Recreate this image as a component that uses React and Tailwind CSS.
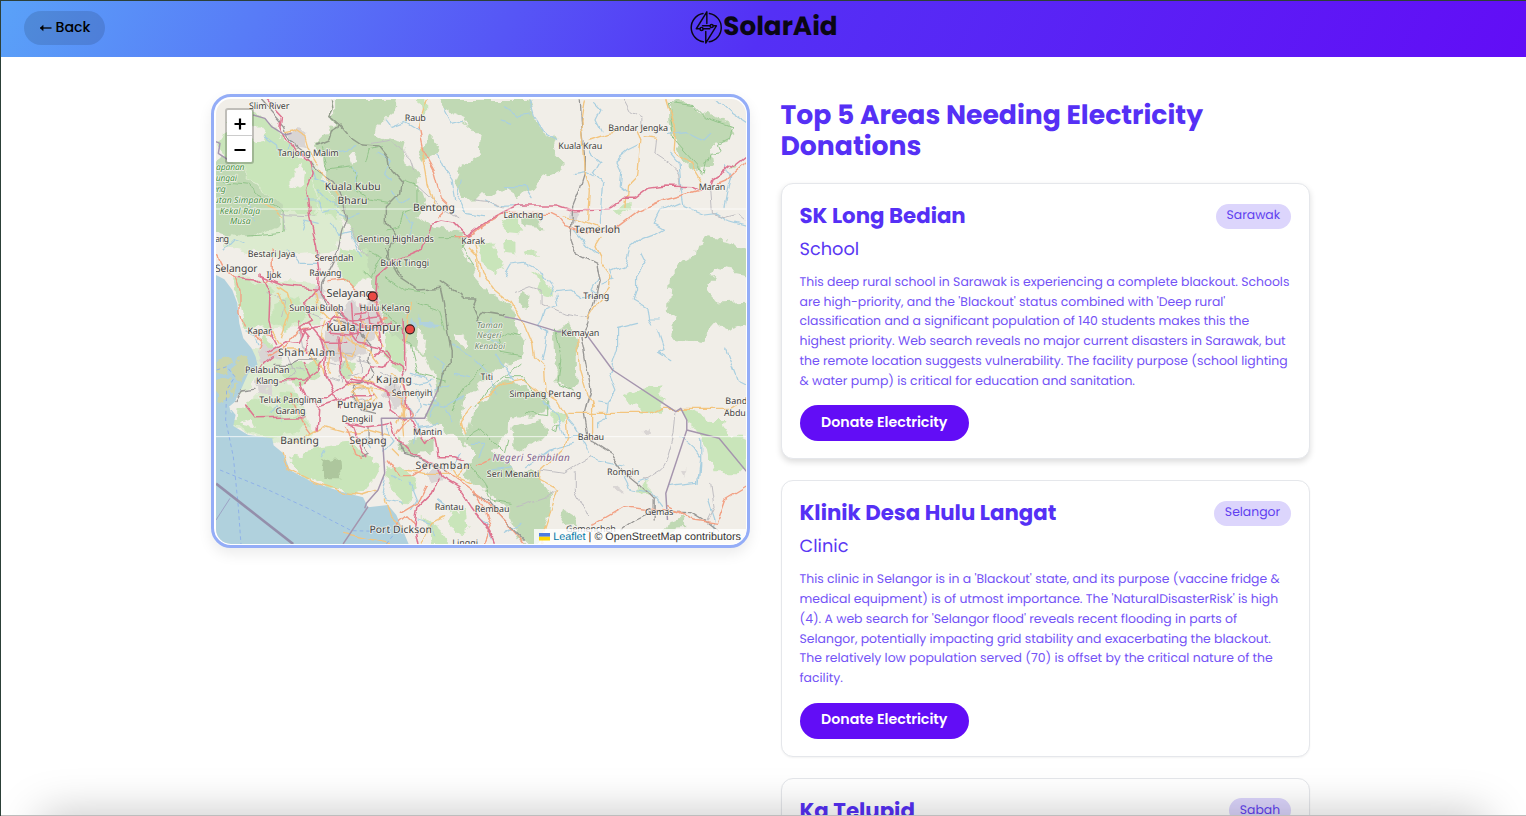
import React from "react";

const areas = [
  {
    name: "SK Long Bedian",
    type: "School",
    state: "Sarawak",
    lines: [
      "This deep rural school in Sarawak is experiencing a complete blackout. Schools",
      "are high-priority, and the 'Blackout' status combined with 'Deep rural'",
      "classification and a significant population of 140 students makes this the",
      "highest priority. Web search reveals no major current disasters in Sarawak, but",
      "the remote location suggests vulnerability. The facility purpose (school lighting",
      "& water pump) is critical for education and sanitation.",
    ],
    shadow: "shadow-[0_3px_6px_rgba(0,0,0,0.14)]",
  },
  {
    name: "Klinik Desa Hulu Langat",
    type: "Clinic",
    state: "Selangor",
    lines: [
      "This clinic in Selangor is in a 'Blackout' state, and its purpose (vaccine fridge &",
      "medical equipment) is of utmost importance. The 'NaturalDisasterRisk' is high",
      "(4). A web search for 'Selangor flood' reveals recent flooding in parts of",
      "Selangor, potentially impacting grid stability and exacerbating the blackout.",
      "The relatively low population served (70) is offset by the critical nature of the",
      "facility.",
    ],
    shadow: "shadow-[0_1px_2px_rgba(0,0,0,0.05)]",
  },
  {
    name: "Kg Telupid",
    type: "Village",
    state: "Sabah",
    lines: [],
    shadow: "shadow-[0_1px_2px_rgba(0,0,0,0.05)]",
  },
];

function Logo() {
  return (
    <svg viewBox="0 0 40 44" className="mt-[4px] h-[44px] w-[39px] shrink-0" fill="none" stroke="#0a0714" strokeWidth="1.5" strokeLinejoin="round" strokeLinecap="round">
      <path d="M18.5 8.2A14.7 14.7 0 0 0 18.8 37.2M25 8.1A14.7 14.7 0 0 1 24.8 37.1" />
      <path d="M22.4 6.5 11.6 23.8H15.4M18.6 23.8H25.5M22.4 6.5V18.5" />
      <path d="M21.3 38.5 32.2 20.8H29M25.6 20.8H18M21.3 38.5V26.5" />
      <circle cx="27.3" cy="21" r="1.6" />
      <circle cx="17" cy="24" r="1.6" />
    </svg>
  );
}

const forest = [
  "M385 27H580L560 75L520 110L515 132L560 150L602 160L590 205L622 230L640 280L662 340L640 375L690 410L785 430L770 470L800 530L815 560L850 600L905 630L925 680L945 720L930 780L905 830L870 850L820 900L780 940L762 1000L790 1030L782 1080L745 1040L690 1010L660 980L700 915L695 870L660 800L600 760L550 720L530 650L500 575L490 500L460 470L440 410L400 350L360 260L350 200L330 170L365 130L385 100Z",
  "M650 150L680 135L706 165L702 205L665 212L648 180Z",
  "M705 27H972L992 80L1000 110L1060 150L1050 185L1084 220L1070 235L1020 258L985 300L940 315L900 285L860 320L770 325L752 270L775 220L825 190L832 140L790 95L740 75Z",
  "M1395 35L1440 27L1465 45L1490 70L1570 95L1588 135L1560 165L1520 170L1525 215L1497 235L1492 258L1440 215L1410 150L1395 90Z",
  "M1475 460L1515 445L1560 455L1640 480V555L1590 545L1530 530L1512 600L1545 640L1640 635V700L1580 720L1540 700L1480 765L1395 740L1400 705L1420 690L1395 650L1400 560L1430 520L1465 500Z",
  "M20 225L70 190L145 280L235 355L235 400L150 440L95 435L20 410Z",
  "M885 740L935 725L960 760L955 800L905 820L880 785Z",
  "M1045 725L1090 705L1115 760L1120 880L1095 905L1050 880L1060 845L1050 800Z",
  "M810 965L860 900L900 870L960 880L1025 925L1040 960L985 980L915 975L912 1030L860 1080L900 1100L928 1150V1200L900 1240L865 1220L850 1190L790 1190L785 1140L810 1100L785 1050Z",
  "M925 1010L1015 990L1020 1040L960 1080L920 1060Z",
  "M925 1150L1010 1150L1035 1220L1030 1290L1000 1362H960L920 1290L900 1240Z",
  "M580 1050L690 1040L690 1085L620 1095L585 1080Z",
  "M1085 1265L1110 1280L1125 1310L1070 1315Z",
  "M1390 1290L1440 1280L1440 1320L1380 1325Z",
  "M950 605L970 620L960 660L945 635Z",
  "M1000 380L1005 420L960 415L955 385Z",
];

const park = [
  "M145 60L180 80L200 110L250 155L320 225L325 290L345 350L325 375L240 360L145 275L70 190L55 205L45 160L75 75Z",
  "M320 230L360 270L400 350L410 390L360 380L335 310Z",
  "M80 565L140 575L190 580L195 640L200 700L150 720L112 705L95 620Z",
  "M205 640L285 610L300 680L240 720L205 700Z",
  "M410 470L490 480L500 560L445 590L400 540Z",
  "M90 945L160 935L230 970L290 980L310 1010L270 1030L200 1040L130 1030L85 1005Z",
  "M290 1080L420 1065L480 1080L520 1140L475 1205L400 1200L310 1165L245 1110Z",
  "M180 740L215 760L210 800L170 780Z",
  "M265 815L350 815L340 860L280 890L240 850Z",
  "M220 905L280 910L290 950L230 960Z",
  "M415 815H450V850L430 865L412 850Z",
  "M545 1125L590 1130L640 1190L600 1240L560 1200Z",
  "M545 720L600 745L605 820L575 840L540 800Z",
  "M640 27H665V70L645 65Z",
  "M820 455L860 460L900 535L880 550L845 535Z",
  "M895 450L930 450L930 490L900 485Z",
  "M955 485L1000 475L1000 500L965 500Z",
  "M980 540L1010 560L1045 605L1045 620L1010 610Z",
  "M1225 360L1260 330L1280 350L1250 385Z",
  "M885 395L950 385L950 425L900 420Z",
  "M1580 230L1600 220L1600 240Z",
  "M1250 925L1290 895L1375 880L1365 910L1385 930L1365 965L1310 965L1280 940Z",
  "M1440 955L1490 970L1525 990L1570 990L1560 1020L1640 1060V1150L1525 1150L1510 1080L1490 1050L1460 1010Z",
  "M1050 965L1078 975L1080 1000L1050 1000Z",
  "M1295 1190L1330 1175L1330 1200L1300 1208Z",
  "M740 1260L790 1270L795 1310L770 1330L730 1300Z",
  "M660 1280L700 1310L730 1362H680Z",
  "M180 1100L240 1110L230 1130Z",
];

const urban = [
  "M170 760L225 775L225 810L180 820L160 790Z",
  "M540 880L590 890L600 945L560 950L535 920Z",
  "M330 580L360 590L360 620L330 620Z",
  "M440 640L520 625L540 700L500 760L440 760L400 700Z",
  "M360 720L470 710L480 790L430 810L360 800Z",
  "M660 1140L710 1140L730 1170L680 1180Z",
  "M230 120L300 130L315 180L270 175Z",
  "M1095 365L1120 375L1110 400L1090 390Z",
  "M1220 1195L1250 1190L1255 1212L1240 1215Z",
  "M1325 1015L1340 1010L1340 1025L1325 1025Z",
  "M1430 1145L1447 1135L1440 1163Z",
  "M155 880L200 870L190 910L150 920Z",
];

const rivers = [
  "M180 140L215 165L220 195M260 150L250 185M320 230L330 270L380 290M340 300L380 340L400 350M440 230L460 250L450 280M520 190L560 210L540 250L560 270",
  "M545 90L560 110L600 95L640 120M560 300L590 340L620 320M595 375L630 400L615 440M700 195L720 240L740 270L750 330M770 270L760 330L780 370L840 380M720 60L740 100L780 90",
  "M300 330L340 330L355 370L400 360L430 380L460 370M340 400L300 390L290 420M380 400L400 440L440 430L470 500M250 480L280 520L340 520M60 480L90 450L120 460",
  "M975 27L990 80L1020 125L1060 150M900 50L940 80L980 75M890 90L920 100M1165 35L1190 60L1175 90L1190 120M1150 165L1160 190L1190 215L1170 250L1195 280L1190 345L1185 400",
  "M1110 250L1140 245L1170 260M1300 165L1270 180L1235 210L1250 240L1245 290L1270 310M1395 130L1450 125L1500 150L1520 130M1400 190L1425 220L1430 290L1440 350L1500 375L1540 370L1570 390L1640 410",
  "M1565 230L1580 260L1570 300L1560 350M1540 27L1580 65L1640 105M1430 335L1370 360L1350 400L1375 415L1350 430L1310 445L1280 470L1265 525L1220 545L1230 570L1190 585",
  "M1310 490L1325 520L1300 560L1300 600L1290 630L1325 650L1330 690L1340 705M1330 690L1365 690M840 330L880 350L960 345M900 290L960 290L980 320",
  "M900 560L920 525L960 520L1020 550L1050 590L1040 610M1050 605L1100 600L1130 620L1190 620M1055 615L1060 645L1020 660L1010 690L1000 705M1110 420L1150 465L1180 490M1190 620L1160 600L1180 560",
  "M1000 710L1030 730L1025 770L1015 810M870 790L895 830L930 870M810 810L850 850L880 910M1300 700L1240 715L1240 770L1215 850L1235 900L1215 930L1210 980L1180 995L1180 1010",
  "M1180 930L1210 935L1230 910M1360 720L1380 780L1360 790L1400 815M1565 780L1600 870L1640 890M1430 1040L1470 1075L1490 1105L1480 1180M1490 1050L1490 1130L1485 1180M1390 1190L1480 1180",
  "M1080 975L1110 1010L1140 1060L1155 1090M1015 930L1060 980L1080 1040L1130 1040M960 1130L1030 1080L1110 1060M1000 1100L1040 1080M1160 1100L1180 1110L1260 1125",
  "M1260 1160L1280 1200L1340 1210L1370 1250M1300 1180L1330 1170M1510 1230L1530 1290L1520 1330M920 1130L860 1140M800 1060L840 1060L820 1100",
  "M690 800L720 830L700 880M620 850L660 860L700 940M660 940L720 950L780 920M680 980L700 940M740 760L800 800M750 850L790 860M630 1060L640 1000",
  "M540 1160L530 1200L550 1230L590 1240M620 1180L640 1230L620 1260M700 1230L740 1260M740 1140L770 1090M500 1070L480 1040M190 970L220 950L230 990M120 720L150 740L160 765",
  "M640 1290L680 1300L690 1340M820 1280L850 1300L860 1350M900 1330L950 1300M360 1080L350 1100M545 1010L565 1050L540 1080",
  "M600 870L640 880L680 870M640 900L650 950L630 980M610 960L640 1010L700 1000M690 900L730 880M720 960L740 1000M590 1180L560 1160M860 690L850 740L880 760M90 330L130 340L150 390M400 180L430 190L450 170",
];

const yellow = [
  "M245 125L270 120L300 140L310 175L340 225M665 27L650 80L640 110M650 170L665 250L670 290L690 350L735 355M345 240L385 290L410 330M245 690L260 640L250 610L220 590",
  "M1140 27L1130 90L1140 250L1155 300L1150 390M1155 150L1210 130L1240 125M1300 120L1310 150L1300 260L1270 290L1265 350M1320 140L1360 145M1385 27L1395 60L1415 120L1410 185L1460 220L1490 270",
  "M810 460L835 550L870 600L920 640L960 700L985 760L990 800L1020 830L1025 910L1055 930L1085 980L1090 1040L1075 1080L1010 1140L1005 1170L1060 1200L1020 1320L1010 1362",
  "M1190 445L1175 470L1190 500L1190 520L1220 560L1215 595L1180 640L1150 690M1075 380L1130 390L1180 410M820 940L900 880L960 870L1020 920M800 950L770 990L780 1030",
  "M1120 740L1125 840L1150 920L1165 930L1165 1040L1150 1050M1165 930L1170 950M1090 970L1350 970L1380 955L1580 955L1620 930",
  "M260 1060L310 1040L360 1010L430 1030L490 1020L560 1040M235 1090L250 1140L320 1175L410 1205L470 1215L515 1200M200 720L240 780L300 780L360 840M420 880L480 890L530 900L590 930L600 1040",
  "M430 700L440 760L490 780L520 820M350 820L360 860M330 600L340 650L380 690M620 700L600 760M600 1140L660 1150L730 1150L800 1180M560 1080L580 1100M720 1280L680 1300L650 1362",
  "M440 900L490 890L500 930L460 940ZM450 860L510 880M420 740L450 770L440 800L400 790M620 640L610 700L630 720M175 330L230 380",
  "M790 470L820 500L820 560M420 1330L560 1362M545 1230L560 1280L590 1310M740 1130L760 1160L790 1130",
  "M500 900L520 930L480 960L450 930M390 660L410 720L400 780L440 850M470 680L490 730L470 770M515 730L535 770M360 690L350 740L380 790L370 850M220 610L250 680L230 740M560 850L590 870L610 920L580 1000",
];

const orange = [
  "M640 110L655 180L690 245L710 320L735 345L700 380M35 500L50 530L90 565L105 600L105 670L118 705M205 475L205 555L180 575M370 575L420 570L450 600L520 640L535 700",
  "M810 430L840 405L900 370L1040 370L1060 380L1085 410L1150 430L1240 410L1300 365L1380 330L1490 300M1540 280L1565 270L1640 200M750 440L790 440L815 430",
  "M190 800L240 770L280 720L330 715M255 910L290 990L320 1030M150 735L170 750L160 780M425 1010L450 1090L470 1105M545 1110L580 1160L620 1160L680 1120M720 1140L760 1170L830 1220L900 1290L960 1362",
  "M590 1270L640 1240L665 1190M575 1310L610 1280L630 1300M810 1120H840L860 1110M1165 1305L1260 1250L1340 1260L1430 1265L1470 1290L1540 1300L1565 1230L1640 1185M1390 1250L1430 1270",
  "M810 1200L840 1250L860 1310L840 1362M590 940L620 980L580 1030M450 700L500 710L550 690M150 730L200 740",
];

const red = [
  "M185 27L230 75L225 110L245 155L315 215L322 250L305 300L315 380L335 470L345 540L340 595L360 630L400 660L430 700M165 560L230 585L340 598M165 555L195 620L192 690L200 730L215 760",
  "M340 595L300 640L320 690L285 710L310 740L305 790M665 450L680 400L710 390L745 395L790 440L840 400L940 345L1060 345L1110 362L1215 360L1260 325L1290 325L1330 295L1380 288L1470 290L1490 300M1520 290L1525 270L1570 240L1640 185",
  "M665 450L655 480L560 520L515 560L510 620M90 565L150 570L165 580M185 790L240 755L280 760L300 720L360 710L390 680L440 690L530 680M205 800L180 820L160 850M225 873L300 870L340 840L360 800",
  "M125 945L155 983L300 980M285 880L300 910L345 960L340 1020M340 920L370 920L440 870L500 880L545 900L560 960L600 990M345 740L365 800L360 860L385 910L410 950M400 740L410 850L430 880L470 880L500 830",
  "M440 640L445 700L500 720L560 700M450 670L520 660L540 720M430 720L460 760L520 770L550 800L590 830L600 900L610 980L640 1030L660 1060L690 1040L700 1100L750 1100L780 1110",
  "M595 690L600 770L600 840M340 950L430 920L510 920M430 1000L490 1010L560 1000L580 1050L620 1090L690 1120L710 1160L760 1190L800 1250L860 1330",
  "M440 1000L470 1080L480 1100M700 1165L680 1210L640 1250L630 1310L640 1362M810 1270L850 1310L870 1362M310 700L360 760L420 760M285 690L290 740M510 620L520 660M520 700L530 770L510 800",
  "M500 830L540 835L560 800L550 780L510 790M375 700L380 730L430 735L480 725M465 640L470 700L455 750M490 650L495 700L530 710M300 820L320 860L300 880",
];

const rail = [
  "M170 30L240 110L250 150L290 180L330 235L385 275L415 320L425 380L410 430L400 480L380 520L350 580L350 620L370 650L430 690",
  "M1125 27L1128 90L1140 190L1140 250L1125 300L1105 350L1100 450L1115 490L1175 520L1185 570L1175 620L1150 700L1130 740L1140 790L1160 900L1150 930L1140 970L1150 1030L1160 1050L1220 1090L1260 1150L1310 1190L1350 1230L1350 1290",
  "M470 740L495 765L490 810L510 850M510 850L500 870L450 890L440 920L470 960L510 970M810 1210L850 1230L890 1280L960 1350M1250 1320L1290 1290L1350 1262L1460 1265L1500 1290L1540 1320M580 1050L600 1090L660 1110L720 1140",
  "M210 820L260 820L280 810L340 810M90 935L110 900L150 895M390 690L450 710L480 750M490 1010L490 1060M470 1100L490 1090L480 1070",
];

const grayRoads = [
  "M500 160L560 150L620 210L630 240M220 370L330 375M235 365L240 420M640 290L700 345L760 380M810 330L850 335L900 355M1260 27L1280 65L1310 85L1310 110M1360 145L1355 190L1400 220L1420 240L1430 300",
  "M1520 300L1525 370L1560 380L1600 370L1640 405M930 610L980 590L1010 600L1010 640L1080 670L1150 680M440 420L470 480L490 500M1010 1140L1080 1150L1160 1100M1110 1145L1110 1200L1150 1280",
  "M1415 965L1410 1030L1390 1100L1370 1140L1320 1170M940 1250L1030 1220L1060 1200M1520 1180L1530 1250L1510 1290M280 710L290 770L350 800M600 840L580 900L600 950M360 760L370 810M420 790L410 870",
  "M370 820L410 830L400 870L360 860M380 790L430 790L470 800L470 850L430 860M440 870L460 900L500 890M460 810L500 820M250 800L270 850L240 880M230 830L300 840M430 940L470 930L520 950M530 850L570 870L560 910M300 660L350 680M180 610L240 630L230 680",
];

const boundary = [
  "M380 27L385 60L375 80L405 105L440 145L470 165L520 168L550 205L555 235L590 275L585 310L545 350L545 400L570 440L545 500M545 500L580 560L640 600L710 595L720 640L725 690L730 730L740 780L740 830L710 850L700 900",
  "M405 105L380 120L370 150L335 165M545 470L555 510L590 560M710 575L745 600L765 610L775 630L820 630L810 655L830 700M820 690L835 670L900 680",
];

const boundaryPurple = [
  "M33 155L45 160L40 190L70 210M145 75L180 85L200 110L240 135L260 130M700 900L660 985H530L540 1150L520 1200L485 1240L480 1255M900 680L940 688L1060 725L1140 725L1225 840L1415 965L1430 955L1448 990V1020L1545 1045L1628 1145M1448 1020L1415 1120L1385 1210L1390 1290M490 1250L415 1362",
];

const reserves = [
  "M33 270L140 280L150 310L235 360V430L130 438",
  "M350 170L370 240L440 230L460 260L450 300L490 330L550 340M480 215L490 180L530 170M590 270L640 290V350L590 370L580 410L540 420M490 480L530 500L500 560L480 540M700 440L780 440L770 470L810 530",
  "M640 640L700 660L720 720M530 650L560 690L600 720M600 750L620 770L640 850L720 870M1395 40L1470 50L1500 80L1580 110L1570 145L1540 160L1550 185L1515 190L1500 250L1410 150Z",
  "M880 740L905 725L950 735M880 740L890 790L950 800M1050 720L1070 800L1060 880L1110 900M810 960L850 900L900 860L950 820M905 860L960 860L985 900L1030 930V980L960 970M785 1045L830 1020L870 1060L900 1090L910 1050",
  "M790 1120L840 1180L860 1230L920 1240M1050 1010L1065 1005L1060 1025L1050 1020ZM740 960L790 880L840 830M545 560L600 600L660 610",
];

const labels = [
  ["Slim River", 193, 58, 122, 27],
  ["Raub", 632, 94, 63, 27],
  ["Tanjong Malim", 310, 199, 184, 27],
  ["Kuala Kubu", 444, 301, 168, 31],
  ["Bharu", 443, 342, 90, 31],
  ["Bentong", 688, 364, 126, 31],
  ["Genting Highlands", 572, 455, 232, 27],
  ["Bukit Tinggi", 600, 528, 147, 27],
  ["Karak", 806, 463, 72, 27],
  ["Bestari Jaya", 200, 501, 143, 27],
  ["Serendah", 388, 512, 117, 27],
  ["Ijok", 207, 564, 45, 27],
  ["Rawang", 362, 557, 97, 27],
  ["Selangor", 94, 547, 128, 31],
  ["Selayang", 434, 622, 138, 33],
  ["Sungai Buloh", 335, 663, 163, 27],
  ["Hulu Kelang", 540, 663, 152, 27],
  ["Bandar Jengka", 1302, 124, 180, 27],
  ["Kuala Krau", 1128, 177, 132, 27],
  ["Lanchang", 957, 384, 120, 27],
  ["Temerloh", 1179, 429, 138, 31],
  ["Maran", 1524, 301, 80, 27],
  ["Triang", 1176, 628, 78, 27],
  ["Kapar", 164, 733, 73, 27],
  ["Kuala Lumpur", 476, 723, 224, 34],
  ["Shah Alam", 305, 798, 172, 31],
  ["Pelabuhan", 187, 848, 134, 27],
  ["Klang", 187, 882, 68, 27],
  ["Teluk Panglima", 257, 938, 188, 27],
  ["Garang", 257, 971, 90, 27],
  ["Kajang", 568, 879, 108, 31],
  ["Semenyih", 622, 918, 122, 27],
  ["Putrajaya", 466, 953, 138, 31],
  ["Dengkil", 457, 996, 94, 27],
  ["Banting", 284, 1062, 116, 31],
  ["Sepang", 490, 1062, 111, 31],
  ["Mantin", 669, 1036, 88, 27],
  ["Seremban", 714, 1137, 163, 31],
  ["Rantau", 734, 1261, 87, 27],
  ["Rembau", 863, 1266, 104, 27],
  ["Port Dickson", 588, 1328, 188, 31],
  ["Linggi", 782, 1367, 78, 27],
  ["Kemayan", 1128, 737, 114, 27],
  ["Titi", 847, 870, 38, 27],
  ["Simpang Pertang", 1023, 921, 216, 27],
  ["Bahau", 1160, 1051, 79, 27],
  ["Seri Menanti", 926, 1160, 158, 27],
  ["Rompin", 1257, 1154, 97, 27],
  ["Gemas", 1365, 1274, 85, 27],
  ["Gemencheh", 1160, 1326, 150, 27],
  ["Bandar", 1610, 943, 92, 27],
  ["Abdul", 1596, 977, 72, 27],
];

const greenLabels = [
  ["apanan", 76, 241, 86],
  ["ungai", 64, 273, 64],
  ["ang", 42, 305, 40],
  ["utan Simpanan", 116, 338, 180],
  ["Kekal Raja", 105, 371, 122],
  ["Musa", 106, 402, 62],
];

const roadLayers = [
  [reserves, "#93c48b", 3],
  [rivers, "#a9cfe0", 3.6],
  [grayRoads, "#bfbdc1", 3],
  [boundary, "#919c8a", 4.4],
  [rail, "#989795", 4],
  [yellow, "#f3c57f", 4],
  [orange, "#f2a083", 4.2],
  [red, "#de7490", 4.6],
];

function AreaMap() {
  return (
    <svg viewBox="33 27 1593 1335" preserveAspectRatio="none" className="block h-full w-full" fontFamily="'Noto Sans', sans-serif">
      <defs>
        <filter id="terrain" filterUnits="userSpaceOnUse" x="0" y="0" width="1660" height="1400" colorInterpolationFilters="sRGB">
          <feTurbulence type="fractalNoise" baseFrequency="0.022" numOctaves="3" seed="4" />
          <feDisplacementMap in="SourceGraphic" scale="46" xChannelSelector="R" yChannelSelector="G" />
        </filter>
        <filter id="winding" filterUnits="userSpaceOnUse" x="0" y="0" width="1660" height="1400" colorInterpolationFilters="sRGB">
          <feTurbulence type="fractalNoise" baseFrequency="0.02" numOctaves="2" seed="9" />
          <feDisplacementMap in="SourceGraphic" scale="25" xChannelSelector="R" yChannelSelector="G" />
        </filter>
      </defs>
      <rect x="33" y="27" width="1600" height="1340" fill="#f1eee8" />
      <g filter="url(#terrain)">
        <path fill="#dcebcf" d="M70 190L320 215L420 380L400 480L200 500L60 470ZM95 560L330 580L350 700L190 720L110 690ZM120 780L220 790L330 1040L240 1070L90 1020Z" />
        {park.map((d) => <path key={d} d={d} fill="#c9e5ba" />)}
        {forest.map((d) => <path key={d} d={d} fill="#c0d9b4" />)}
        <path fill="#adc69d" d="M350 1110L410 1100L415 1165L370 1165L345 1140Z" />
        {urban.map((d) => <path key={d} d={d} fill="#d9d5d4" />)}
        <path fill="#f1eee8" d="M750 730L770 735L800 755L795 770L760 755ZM640 705L665 740L660 790L635 770ZM120 120L150 100L190 150L150 160ZM260 240L300 230L290 290L260 280ZM420 200L440 180L460 210L430 230ZM100 1000L140 990L150 1010Z" />
      </g>
      <path fill="#b0d1dd" d="M33 555L58 568L82 600L97 640L103 700L115 745L140 775L152 800L158 825L130 850L112 890L90 935L72 950L92 975L85 1008L130 1035L202 1045L206 1066L235 1090L255 1140L320 1175L410 1205L475 1222L490 1252L550 1245L575 1275L590 1310L612 1362H33Z" />
      <g filter="url(#terrain)">
        <path fill="#cbd5ab" d="M38 810L65 800L85 820L60 850L38 840ZM95 800L128 800L120 850L98 880L85 850ZM40 870L72 860L78 900L50 945L35 930ZM85 880L100 890L80 915Z" />
        <path fill="#f1eee8" d="M130 893L160 870L170 920L120 945L78 965L95 920Z" />
        <path fill="#b0d1dd" d="M610 690L630 700L625 730L605 718ZM640 680L660 690L700 700L690 712L650 705Z" />
      </g>
      <g filter="url(#winding)">
        {roadLayers.map(([paths, color, width]) => (
          <g key={color} fill="none" stroke={color} strokeWidth={width} strokeLinejoin="round" strokeLinecap="round">
            {paths.map((d) => <path key={d} d={d} />)}
          </g>
        ))}
      </g>
      {boundaryPurple.map((d) => <path key={d} d={d} fill="none" stroke="#a595ae" strokeWidth="4.4" strokeLinejoin="round" />)}
      <g fill="none" stroke="#8fb1e8" strokeWidth="3" strokeDasharray="11 9">
        <path d="M45 1140L180 1195L320 1260L440 1322L560 1325M35 840L65 830L90 860L65 900L62 990L85 1100L100 1250L108 1362M545 1362L570 1330" />
      </g>
      <path d="M33 1181L265 1362" stroke="#948fab" strokeWidth="8" />
      <path d="M33 1290L75 1225" stroke="#9da3c5" strokeWidth="3" />
      <path d="M33 357H1628M33 1040H1628" stroke="#ffffff" strokeOpacity="0.75" strokeWidth="3" />
      <g fill="#3f3f3f" stroke="#f8f6f1" strokeOpacity="0.8" strokeWidth="5" strokeLinejoin="round" paintOrder="stroke" textAnchor="middle">
        {labels.map(([t, x, y, w, s]) => (
          <text key={t} x={x} y={y} fontSize={s} textLength={w}>{t}</text>
        ))}
        <text x="51" y="455" fontSize="27" textLength="42">ang</text>
        <g fill="#4b9448" fontStyle="italic" fontSize="26">
          {greenLabels.map(([t, x, y, w]) => <text key={t} x={x} y={y} textLength={w}>{t}</text>)}
        </g>
        <g fill="#6d876b" fontStyle="italic" fontSize="25">
          <text x="856" y="714" textLength="78">Taman</text>
          <text x="854" y="745" textLength="74">Negeri</text>
          <text x="856" y="777" textLength="92">Kenaboi</text>
        </g>
        <text x="980" y="1112" fontSize="30" fontStyle="italic" fill="#82618c" textLength="232">Negeri Sembilan</text>
      </g>
      <g fill="#ea4a45" stroke="#33201f" strokeWidth="3.4">
        <circle cx="504" cy="619" r="13.5" />
        <circle cx="616" cy="718" r="13.5" />
      </g>
    </svg>
  );
}

function MapPanel() {
  return (
    <div className="relative h-[454px] w-[539px] shrink-0 overflow-hidden rounded-[20px] border-[3.5px] border-[#94adf7] bg-white p-[1.5px] shadow-[0_6px_14px_rgba(0,0,0,0.08)]">
      <div className="h-full w-full overflow-hidden rounded-[15px]">
        <AreaMap />
      </div>
      <div className="absolute left-[11px] top-[10.5px] flex w-[29px] flex-col overflow-hidden rounded-[3px] border-2 border-black/20 bg-white bg-clip-padding">
        <button className="flex h-[26.5px] items-center justify-center border-b border-[#ccc] pt-[3px]">
          <svg viewBox="0 0 12 12" className="h-3 w-3" stroke="#000" strokeWidth="2.2"><path d="M.5 6h11M6 .5v11" /></svg>
        </button>
        <button className="flex h-[26px] items-center justify-center pt-[2px]">
          <svg viewBox="0 0 12 12" className="h-3 w-3" stroke="#000" strokeWidth="2.2"><path d="M.5 6h11" /></svg>
        </button>
      </div>
      <div className="absolute bottom-[1px] right-[1px] flex h-[15px] items-center whitespace-nowrap bg-white/80 pl-[5px] pr-[5px] pt-px font-['Liberation_Sans',sans-serif] text-[10.8px] text-[#333]">
        <svg viewBox="0 0 12 8" className="mr-[3px] h-[7.5px] w-[11px]"><path fill="#4c7be1" d="M0 0h12v4H0z" /><path fill="#ffd500" d="M0 4h12v4H0z" /></svg>
        <span className="text-[#0078a8]">Leaflet</span>
        <span className="whitespace-pre"> | © OpenStreetMap contributors</span>
      </div>
    </div>
  );
}

function AreaCard({ area }) {
  return (
    <article className={`flex min-h-[276.4px] flex-col items-start rounded-[12px] border border-[#e5e7eb] bg-white px-[18px] pt-[18px] ${area.shadow}`}>
      <div className="flex h-[28px] w-full items-center justify-between">
        <h2 className="whitespace-nowrap pt-[2px] text-[21.3px] font-bold leading-[32px] text-[#5530f5]">{area.name}</h2>
        <span className="flex h-[25px] items-center rounded-full bg-[#dcd5fc] px-[10.4px] pt-[0.5px] text-[12.4px] text-[#5f3ff0]">{area.state}</span>
      </div>
      <p className="mt-[5px] h-[28px] text-[17.75px] leading-[29px] text-[#5a38f3]">{area.type}</p>
      <div className="mt-[9.7px] text-[12.43px] leading-[19.83px] text-[#7352f6]">
        {area.lines.map((line) => <p key={line} className="w-max whitespace-nowrap">{line}</p>)}
      </div>
      <button className="mt-[13.5px] flex h-[36px] w-[169.5px] items-center justify-center whitespace-nowrap rounded-full bg-[#620df6] pb-[1px] text-[14.2px] font-semibold text-white">
        Donate Electricity
      </button>
    </article>
  );
}

export default function App() {
  return (
    <div className="relative h-screen w-full overflow-hidden border-l border-t border-[#2c4038] bg-white font-['Poppins','Inter',sans-serif] [text-rendering:geometricPrecision]">
      <header className="grid h-[55.5px] grid-cols-3 bg-[linear-gradient(115deg,#5aa2f8_0%,#5430f5_50%,#620df6_100%)] pl-[23px] pr-[23px]">
        <div className="pt-[10px]">
          <button className="flex h-[34px] w-[81px] items-center justify-center gap-[4px] whitespace-nowrap rounded-full bg-black/12 pb-[1px] text-[14.2px] font-medium text-black">
            <svg viewBox="0 0 13 8" className="h-2 w-[13px]" fill="none" stroke="#000" strokeWidth="1.3"><path d="M1.5 4H12.5" /><path d="M4.2 1.2 1 4l3.2 2.8Z" fill="#000" strokeWidth="0.4" /></svg>
            <span>Back</span>
          </button>
        </div>
        <div className="flex items-start justify-center pr-[4px]">
          <Logo />
          <span className="-ml-[1px] mt-[8px] whitespace-nowrap text-[26.2px] font-bold leading-[36px] text-[#0a0714]">SolarAid</span>
        </div>
      </header>
      <main className="flex items-start gap-[30.5px] pl-[210px] pt-[37.5px]">
        <MapPanel />
        <section className="w-[529px]">
          <h1 className="mt-[5.5px] text-[26.65px] font-bold leading-[31.5px] text-[#5530f5]">
            Top 5 Areas Needing Electricity
            <br />
            Donations
          </h1>
          <div className="mt-[20.5px] flex flex-col gap-[21px]">
            {areas.map((a) => <AreaCard key={a.name} area={a} />)}
          </div>
        </section>
      </main>
      <div className="absolute inset-x-[40px] top-full h-10 shadow-[0_0_46px_rgba(0,0,0,0.26)]" />
      <div className="absolute inset-x-0 bottom-0 h-px bg-[#bdbdbd]" />
    </div>
  );
}
